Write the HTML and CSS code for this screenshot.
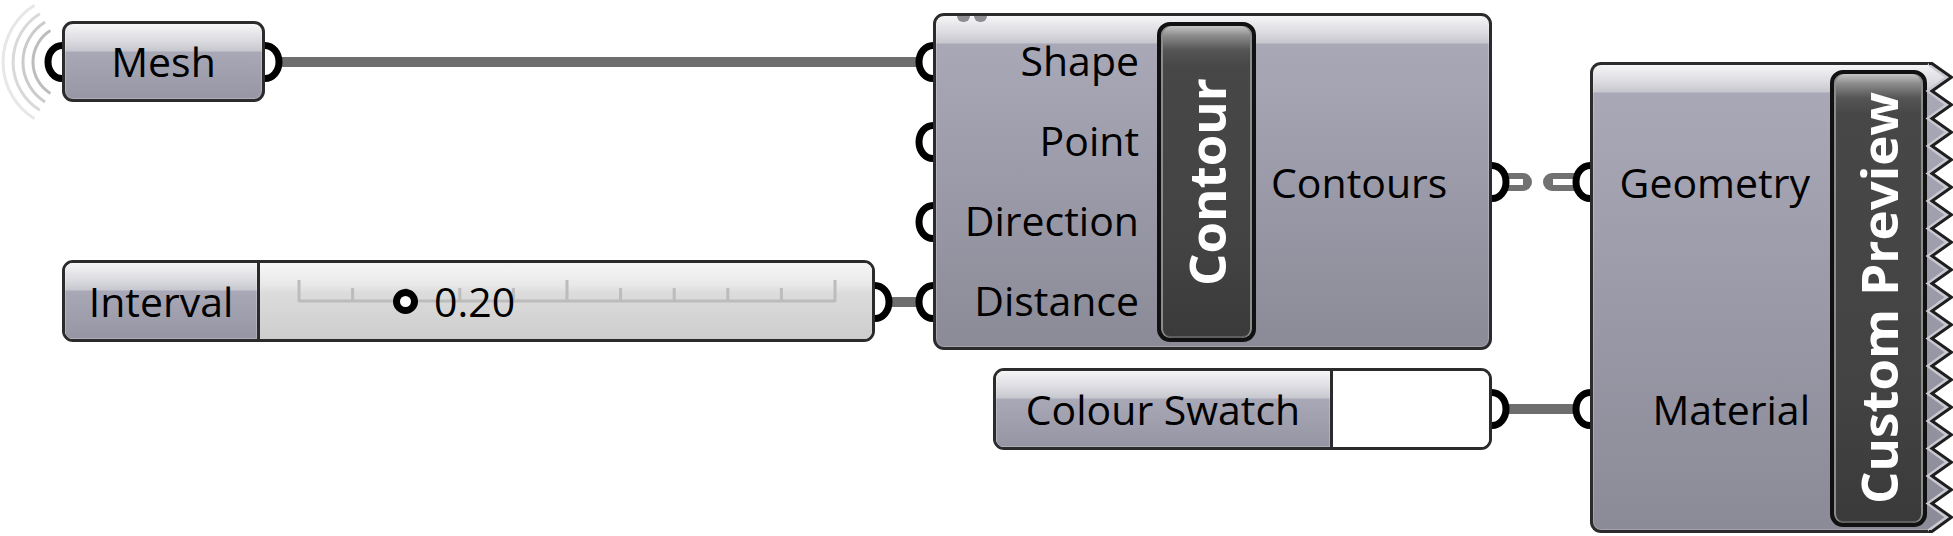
FILE: index.html
```html
<!DOCTYPE html>
<html>
<head>
<meta charset="utf-8">
<link rel="stylesheet" href="styles.css">
</head>
<body>
<div class="canvas">
  <svg class="wires" width="1953" height="536" viewBox="0 0 1953 536">
    <g fill="none" stroke-width="3">
      <path d="M50.4 30.6 A37 37 0 0 0 50.4 93.4" stroke="#bdbdbd"/>
      <path d="M45.1 22.1 A47 47 0 0 0 45.1 101.9" stroke="#cbcbcb"/>
      <path d="M39.8 13.7 A57 57 0 0 0 39.8 110.3" stroke="#d9d9d9"/>
      <path d="M34.5 5.2 A67 67 0 0 0 34.5 118.8" stroke="#e7e7e7"/>
    </g>
    <g stroke="#6e6e6e" stroke-width="10">
      <line x1="265" y1="62" x2="933" y2="62"/>
      <line x1="875" y1="302" x2="933" y2="302"/>
      <line x1="1492" y1="409" x2="1590" y2="409"/>
    </g>
    <g stroke="#717171" stroke-width="18" stroke-linecap="round">
      <line x1="1490" y1="182" x2="1523" y2="182"/>
      <line x1="1552" y1="182" x2="1600" y2="182"/>
    </g>
    <g stroke="#ffffff" stroke-width="6">
      <line x1="1490" y1="182" x2="1523" y2="182"/>
      <line x1="1553" y1="182" x2="1600" y2="182"/>
    </g>
    <g fill="#fff" stroke="#000" stroke-width="7">
      <ellipse cx="62" cy="62" rx="14" ry="16.5"/>
      <ellipse cx="265" cy="62" rx="14" ry="16.5"/>
      <ellipse cx="933" cy="62" rx="14" ry="16.5"/>
      <ellipse cx="933" cy="142" rx="14" ry="16.5"/>
      <ellipse cx="933" cy="222" rx="14" ry="16.5"/>
      <ellipse cx="933" cy="302" rx="14" ry="16.5"/>
      <ellipse cx="875" cy="302" rx="14" ry="16.5"/>
      <ellipse cx="1492" cy="182" rx="14" ry="16.5"/>
      <ellipse cx="1492" cy="409" rx="14" ry="16.5"/>
      <ellipse cx="1590" cy="182" rx="14" ry="16.5"/>
      <ellipse cx="1590" cy="409" rx="14" ry="16.5"/>
    </g>
  </svg>

  <div class="node skin mesh">Mesh</div>

  <div class="node slider">
    <div class="slider-label skin">Interval</div>
    <div class="track">
      <svg class="ticks" width="612" height="76" viewBox="0 0 612 76">
        <g stroke="#bcbcbc" stroke-width="3">
          <line x1="39" y1="38" x2="575" y2="38"/>
          <line x1="39" y1="17" x2="39" y2="39"/>
          <line x1="92.6" y1="25" x2="92.6" y2="39"/>
          <line x1="146.2" y1="25" x2="146.2" y2="39"/>
          <line x1="199.8" y1="25" x2="199.8" y2="39"/>
          <line x1="253.4" y1="25" x2="253.4" y2="39"/>
          <line x1="307" y1="17" x2="307" y2="39"/>
          <line x1="360.6" y1="25" x2="360.6" y2="39"/>
          <line x1="414.2" y1="25" x2="414.2" y2="39"/>
          <line x1="467.8" y1="25" x2="467.8" y2="39"/>
          <line x1="521.4" y1="25" x2="521.4" y2="39"/>
          <line x1="575" y1="17" x2="575" y2="39"/>
        </g>
      </svg>
      <span class="dial"></span>
      <span class="value">0.20</span>
    </div>
  </div>

  <div class="node skin comp contour">
    <span class="dot dot-a"></span><span class="dot dot-b"></span>
    <div class="inputs">
      <div class="port">Shape</div>
      <div class="port">Point</div>
      <div class="port">Direction</div>
      <div class="port">Distance</div>
    </div>
    <div class="capsule"><span>Contour</span></div>
    <div class="outputs"><div class="port">Contours</div></div>
  </div>

  <div class="node swatch">
    <div class="swatch-label skin">Colour Swatch</div>
    <div class="swatch-colour"></div>
  </div>

  <div class="node skin comp preview">
    <div class="inputs">
      <div class="port">Geometry</div>
      <div class="port">Material</div>
    </div>
    <div class="capsule"><span>Custom Preview</span></div>
    <svg class="zigzag" width="26" height="471" viewBox="0 0 26 471">
      <defs>
        <linearGradient id="zg" gradientUnits="userSpaceOnUse" x1="0" y1="0" x2="0" y2="471">
          <stop offset="0" stop-color="#f5f5f7"/>
          <stop offset="0.038" stop-color="#dedee3"/>
          <stop offset="0.064" stop-color="#c7c7cf"/>
          <stop offset="0.066" stop-color="#a9a8b7"/>
          <stop offset="1" stop-color="#8b8a97"/>
        </linearGradient>
      </defs>
      <polygon fill="url(#zg)" points="-1,0 2,1.5 21.5,15.25 2,29 21.5,42.75 2,56.5 21.5,70.25 2,84 21.5,97.75 2,111.5 21.5,125.25 2,139 21.5,152.75 2,166.5 21.5,180.25 2,194 21.5,207.75 2,221.5 21.5,235.25 2,249 21.5,262.75 2,276.5 21.5,290.25 2,304 21.5,317.75 2,331.5 21.5,345.25 2,359 21.5,372.75 2,386.5 21.5,400.25 2,414 21.5,427.75 2,441.5 21.5,455.25 2,469 -1,471"/>
      <polyline fill="none" stroke="#c9c9d2" stroke-width="3.5" points="-1.5,1.5 17.5,15.25 -1.5,29 17.5,42.75 -1.5,56.5 17.5,70.25 -1.5,84 17.5,97.75 -1.5,111.5 17.5,125.25 -1.5,139 17.5,152.75 -1.5,166.5 17.5,180.25 -1.5,194 17.5,207.75 -1.5,221.5 17.5,235.25 -1.5,249 17.5,262.75 -1.5,276.5 17.5,290.25 -1.5,304 17.5,317.75 -1.5,331.5 17.5,345.25 -1.5,359 17.5,372.75 -1.5,386.5 17.5,400.25 -1.5,414 17.5,427.75 -1.5,441.5 17.5,455.25 -1.5,469"/>
      <polyline fill="none" stroke="#1e1e1e" stroke-width="3" stroke-linejoin="miter" points="-1,1.5 2,1.5 21.5,15.25 2,29 21.5,42.75 2,56.5 21.5,70.25 2,84 21.5,97.75 2,111.5 21.5,125.25 2,139 21.5,152.75 2,166.5 21.5,180.25 2,194 21.5,207.75 2,221.5 21.5,235.25 2,249 21.5,262.75 2,276.5 21.5,290.25 2,304 21.5,317.75 2,331.5 21.5,345.25 2,359 21.5,372.75 2,386.5 21.5,400.25 2,414 21.5,427.75 2,441.5 21.5,455.25 2,469.5 -1,469.5"/>
    </svg>
  </div>
</div>
</body>
</html>
```

FILE: styles.css
```css
html, body {
  margin: 0;
  padding: 0;
  background: #ffffff;
}

.canvas {
  position: relative;
  width: 1953px;
  height: 536px;
  overflow: hidden;
  background: #ffffff;
  font-family: "Open Sans", "Noto Sans", sans-serif;
  font-size: 41px;
  color: #000;
}

.wires {
  position: absolute;
  left: 0;
  top: 0;
  z-index: 0;
}

.node {
  position: absolute;
  z-index: 1;
  box-sizing: border-box;
  border: 3px solid #2b2b2b;
  border-radius: 11px;
}

.skin {
  background: linear-gradient(to bottom,
    #f5f5f7 0,
    #dedee3 15px,
    #c7c7cf 27px,
    #a9a8b7 28px,
    var(--end, #9796a4) 100%);
  box-shadow: inset 0 0 0 1px rgba(255, 255, 255, 0.22);
}

/* Mesh parameter */
.mesh {
  left: 62px;
  top: 21px;
  width: 203px;
  height: 81px;
  display: flex;
  align-items: center;
  justify-content: center;
  line-height: 1;
}

/* Number slider */
.slider {
  left: 62px;
  top: 260px;
  width: 813px;
  height: 82px;
  display: flex;
  overflow: hidden;
}

.slider-label {
  width: 192px;
  display: flex;
  align-items: center;
  justify-content: center;
  line-height: 1;
  --end: #9695a3;
}

.track {
  flex: 1;
  position: relative;
  border-left: 3px solid #2b2b2b;
  background: linear-gradient(to bottom,
    #f7f7f7 0,
    #e8e8e8 22px,
    #dcdcdc 30px,
    #cdcdcd 100%);
  display: flex;
  align-items: center;
  padding-left: 133px;
}

.ticks {
  position: absolute;
  left: 0;
  top: 0;
}

.dial {
  position: relative;
  width: 25px;
  height: 25px;
  box-sizing: border-box;
  border: 7px solid #000;
  border-radius: 50%;
  background: #fff;
}

.value {
  position: relative;
  margin-left: 16px;
  font-size: 41px;
  line-height: 1;
}

/* Components */
.comp {
  display: flex;
}

.contour {
  left: 933px;
  top: 13px;
  width: 559px;
  height: 337px;
  padding: 6px 0 5px 0;
  --end: #8b8a97;
}

.dot {
  position: absolute;
  top: 0;
  width: 13px;
  height: 6px;
  border-radius: 0 0 7px 7px;
  background: #8d8d92;
}

.dot-a { left: 21px; }
.dot-b { left: 38px; }

.inputs {
  display: flex;
  flex-direction: column;
  align-items: flex-end;
  box-sizing: border-box;
}

.contour .inputs {
  width: 221px;
  padding-right: 18px;
  margin-top: -2px;
}

.port {
  height: 80px;
  display: flex;
  align-items: center;
  line-height: 1;
  white-space: nowrap;
}

.capsule {
  flex-shrink: 0;
  box-sizing: border-box;
  border: 4px solid #111;
  border-radius: 13px;
  background: linear-gradient(to bottom,
    #c4c4c4 0,
    #8a8a8a 10px,
    #555555 24px,
    #474747 40px,
    #434343 70%,
    #3a3a3a 100%);
  box-shadow: inset 2px 0 0 #8c8c8c, inset -2px 0 0 #8c8c8c, inset 0 -2px 0 #5e5e5e;
  display: flex;
  align-items: center;
  justify-content: center;
  color: #fff;
  font-weight: 700;
  font-size: 51px;
}

.capsule span {
  writing-mode: vertical-rl;
  transform: rotate(180deg);
  white-space: nowrap;
  line-height: 1;
}

.contour .capsule {
  width: 99px;
}

.outputs {
  flex: 1;
  display: flex;
  align-items: center;
  padding-left: 15px;
}

/* Colour swatch */
.swatch {
  left: 993px;
  top: 368px;
  width: 499px;
  height: 82px;
  display: flex;
  overflow: hidden;
}

.swatch-label {
  width: 334px;
  display: flex;
  align-items: center;
  justify-content: center;
  line-height: 1;
  --end: #9695a3;
}

.swatch-colour {
  flex: 1;
  background: #ffffff;
  border-left: 3px solid #2b2b2b;
}

/* Custom preview */
.preview {
  left: 1590px;
  top: 62px;
  width: 340px;
  height: 471px;
  border-right: 0;
  border-radius: 11px 0 0 11px;
  padding: 5px 3px 3px 0;
  --end: #8b8a97;
}

.preview .inputs {
  width: 237px;
  padding-right: 20px;
  padding-top: 72px;
  gap: 147px;
}

.preview .capsule {
  width: 97px;
}

.zigzag {
  position: absolute;
  left: 100%;
  top: -3px;
  overflow: visible;
}
```
